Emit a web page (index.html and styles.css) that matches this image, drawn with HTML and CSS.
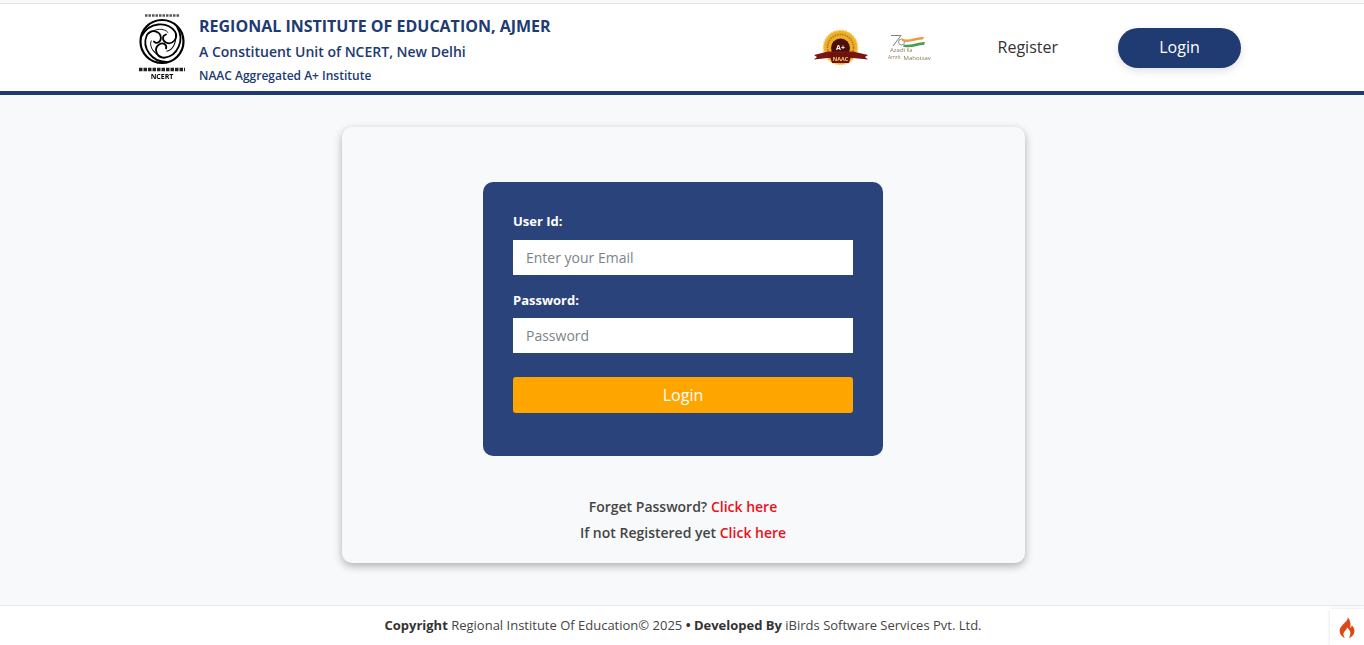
FILE: index.html
```html
<!DOCTYPE html>
<html lang="en">
<head>
    <title>Login - Regional Institute of Education, Ajmer</title>
    <meta charset="utf-8" />
    <link rel="stylesheet" href="styles.css">
</head>
<body>
<!--header-->
<header class="top-bar">
    <div class="brand">
        <svg class="ncert-logo" width="48" height="70" viewBox="0 0 48 70">
            <line x1="7" y1="2.500" x2="41" y2="2.500" stroke="#555" stroke-width="2.500" stroke-dasharray="2.500 1" />
            <circle cx="24" cy="28.500" r="21.500" fill="#fff" stroke="#000" stroke-width="2.200" />
            <g transform="translate(24 28.500)" fill="none" stroke="#000" stroke-linecap="round">
                <g id="arm">
                    <path d="M-20 -6 C-13 -19 5 -21 13 -10 C17 -3 10 4 4 1 C0 -1 0 -6 4 -7" stroke-width="1.800" />
                    <path d="M-13 -8 C-7 -13 2 -14 6 -9" stroke-width="0.900" />
                </g>
                <use href="#arm" transform="rotate(120)" />
                <use href="#arm" transform="rotate(240)" />
            </g>
            <line x1="1" y1="56.500" x2="47" y2="56.500" stroke="#222" stroke-width="3.500" stroke-dasharray="3.500 1" />
            <text x="24" y="66" class="ncert-word" text-anchor="middle">NCERT</text>
        </svg>
        <div class="brand-text">
            <h1>REGIONAL INSTITUTE OF EDUCATION, AJMER</h1>
            <p class="sub">A Constituent Unit of NCERT, New Delhi</p>
            <p class="naac">NAAC Aggregated A+ Institute</p>
        </div>
    </div>
    <div class="top-right">
        <svg class="naac-logo" width="54" height="38" viewBox="0 0 54 38">
            <circle cx="26.500" cy="18.500" r="17" fill="#eeb02a" stroke="#f6cc5a" stroke-width="1.500" stroke-dasharray="2 1" />
            <circle cx="26.500" cy="18.500" r="13" fill="none" stroke="#a8731c" stroke-width="1.500" stroke-dasharray="1.500 1" />
            <circle cx="26.500" cy="19" r="9.500" fill="#4e0f0b" />
            <path d="M0 26 L14 22.500 L39 22.500 L54 26 L51 28 L54 30.500 L39 29 L14 29 L0 30.500 L3 28 Z" fill="#7a1512" />
            <path d="M15 24 H38 L35 34 H18 Z" fill="#6d120e" />
            <text x="26.500" y="20.500" class="naac-a" text-anchor="middle">A+</text>
            <text x="26.500" y="31.500" class="naac-word" text-anchor="middle">NAAC</text>
        </svg>
        <svg class="azadi-logo" width="46" height="26" viewBox="0 0 46 26">
            <path d="M3 0.500 H13 L5 11" fill="none" stroke="#7d6f5e" stroke-width="0.900" />
            <circle cx="13.500" cy="7" r="3" fill="none" stroke="#8d8d9c" stroke-width="1" />
            <path d="M14 3.500 C20 7 28 1 36 2 L35 4.500 C28 4 21 9 14 6 Z" fill="#f09a3e" />
            <path d="M16 9.500 C22 11 29 7 37 7 L36 10 C29 10 22 14 15 11.500 Z" fill="#4b9c52" />
            <text x="2" y="17" class="azadi-big">Azadi</text>
            <text x="18.500" y="17" class="azadi-small">Ka</text>
            <text x="0" y="24" class="azadi-small">Amrit</text>
            <text x="15.500" y="25" class="azadi-mid">Mahotsav</text>
        </svg>
        <a href="#" class="reg-link">Register</a>
        <a href="#" class="login-pill">Login</a>
    </div>
</header>

<!--login-->
<main class="page">
    <div class="card">
        <form class="login-box">
            <label for="user">User Id:</label>
            <input type="text" id="user" placeholder="Enter your Email">
            <label for="pass">Password:</label>
            <input type="password" id="pass" placeholder="Password">
            <button type="button">Login</button>
        </form>
        <p class="help">Forget Password? <a href="#">Click here</a></p>
        <p class="help">If not Registered yet <a href="#">Click here</a></p>
    </div>
</main>

<footer class="foot">
    <p><b>Copyright</b> Regional Institute Of Education© 2025 <b>• Developed By</b> iBirds Software Services Pvt. Ltd.</p>
    <div class="ci-tab">
        <svg width="16" height="21" viewBox="0 0 16 21">
            <path d="M8.500 0 C9.500 3.500 6 5 3.500 8 C1 10.500 0 13 1 16 C1.800 18.500 3.500 20 6 21 C4.300 19 3.800 16.500 5.500 14.500 C6.500 13.300 7.800 12.500 8 10.500 C10 12 11.500 14 11.300 16.500 C11.200 18 10.800 19.500 10 21 C12.500 20 14.500 18.500 15.300 15.500 C16 12.500 14.500 9.500 12.500 8 C12.800 9.500 12.300 10.500 11.300 11 C11.800 7 11.500 3 8.500 0 Z" fill="#dd4814" />
        </svg>
    </div>
</footer>
</body>
</html>
```

FILE: styles.css
```css
* {
    box-sizing: border-box;
}
body {
    margin: 0;
    height: 645px;
    overflow: hidden;
    display: flex;
    flex-direction: column;
    font-family: "Open Sans", "Liberation Sans", sans-serif;
    background-color: #f8f9fb;
    color: #333;
}
p, h1 {
    margin: 0;
}

/*header*/
.top-bar {
    height: 92px;
    margin-top: 3px;
    flex: none;
    display: flex;
    justify-content: space-between;
    align-items: center;
    padding: 0 123px 0 138px;
    background-color: #fff;
    border-top: 1px solid #e3e3e3;
    border-bottom: 4px solid #203a72;
}
.brand {
    display: flex;
    align-items: center;
    gap: 13px;
}
.ncert-logo {
    display: block;
    filter: blur(.25px);
}
.ncert-word {
    font: 700 7px "Open Sans", sans-serif;
    fill: #000;
}
.brand-text {
    padding-top: 5px;
    color: #203a72;
}
.brand-text h1 {
    font-size: 16px;
    line-height: 26px;
    font-weight: 700;
}
.brand-text .sub {
    font-size: 14px;
    line-height: 26px;
    font-weight: 600;
}
.brand-text .naac {
    font-size: 12px;
    line-height: 22px;
    font-weight: 600;
}
.top-right {
    display: flex;
    align-items: center;
    padding-top: 1px;
}
.naac-logo {
    margin-right: 20px;
    filter: blur(.3px);
}
.azadi-logo {
    margin-right: 64px;
    filter: blur(.2px);
}
.naac-a {
    font: 700 7px "Open Sans", sans-serif;
    fill: #fff;
}
.naac-word {
    font: 700 5.500px "Open Sans", sans-serif;
    fill: #f6d27a;
}
.azadi-big {
    font: 400 6px "Open Sans", sans-serif;
    fill: #8a7a5c;
}
.azadi-mid {
    font: 400 6px "Open Sans", sans-serif;
    fill: #8a7a5c;
}
.azadi-small {
    font: 400 5px "Open Sans", sans-serif;
    fill: #8a7a5c;
}
.reg-link {
    color: #333;
    text-decoration: none;
    font-size: 16px;
    margin-right: 60px;
    margin-bottom: 2px;
}
.login-pill {
    width: 123px;
    height: 40px;
    line-height: 39px;
    text-align: center;
    border-radius: 20px;
    background-color: #203a72;
    color: #fff;
    text-decoration: none;
    font-size: 16px;
    box-shadow: 0 3px 8px rgba(0, 0, 0, .12);
}

/*login*/
.page {
    flex: 1;
    padding-top: 32px;
}
.card {
    width: 683px;
    height: 436px;
    margin-left: 342px;
    padding-top: 55px;
    background-color: #f8f9fb;
    border-radius: 10px;
    box-shadow: 0 3px 8px rgba(0, 0, 0, .3);
    text-align: center;
}
.login-box {
    width: 400px;
    height: 274px;
    margin: 0 0 38px 141px;
    padding: 30px;
    display: flex;
    flex-direction: column;
    text-align: left;
    background-color: #2b437b;
    border-radius: 10px;
}
.login-box label {
    color: #fff;
    font-size: 13px;
    line-height: 18px;
    font-weight: 700;
    margin-bottom: 10px;
}
.login-box input {
    height: 35px;
    padding: 0 13px;
    margin-bottom: 16px;
    border: 0;
    border-radius: 0;
    outline: none;
    background-color: #fff;
    font-family: inherit;
    font-size: 14px;
}
.login-box input + label {
    margin-bottom: 9px;
}
.login-box input::placeholder {
    color: #7d8389;
    opacity: 1;
}
.login-box button {
    height: 36px;
    margin-top: 8px;
    border: 0;
    border-radius: 3px;
    background-color: #ffa500;
    color: #fff;
    font-family: inherit;
    font-size: 16px;
}
.help {
    padding-right: 1px;
    font-size: 14px;
    line-height: 26px;
    font-weight: 600;
    color: #444;
}
.help a {
    color: #e8111a;
    text-decoration: none;
}

/*footer*/
.foot {
    position: relative;
    height: 40px;
    flex: none;
    border-top: 1px solid #e6e8ec;
    background-color: #fff;
    text-align: center;
    font-size: 13px;
    line-height: 39px;
    color: #444;
}
.foot p {
    padding-left: 2px;
}
.foot b {
    color: #333;
}
.ci-tab {
    position: absolute;
    right: 0;
    top: 3px;
    width: 34px;
    height: 37px;
    display: flex;
    align-items: center;
    justify-content: center;
    background-color: #fff;
    box-shadow: 0 0 4px rgba(0, 0, 0, .12);
}
```
